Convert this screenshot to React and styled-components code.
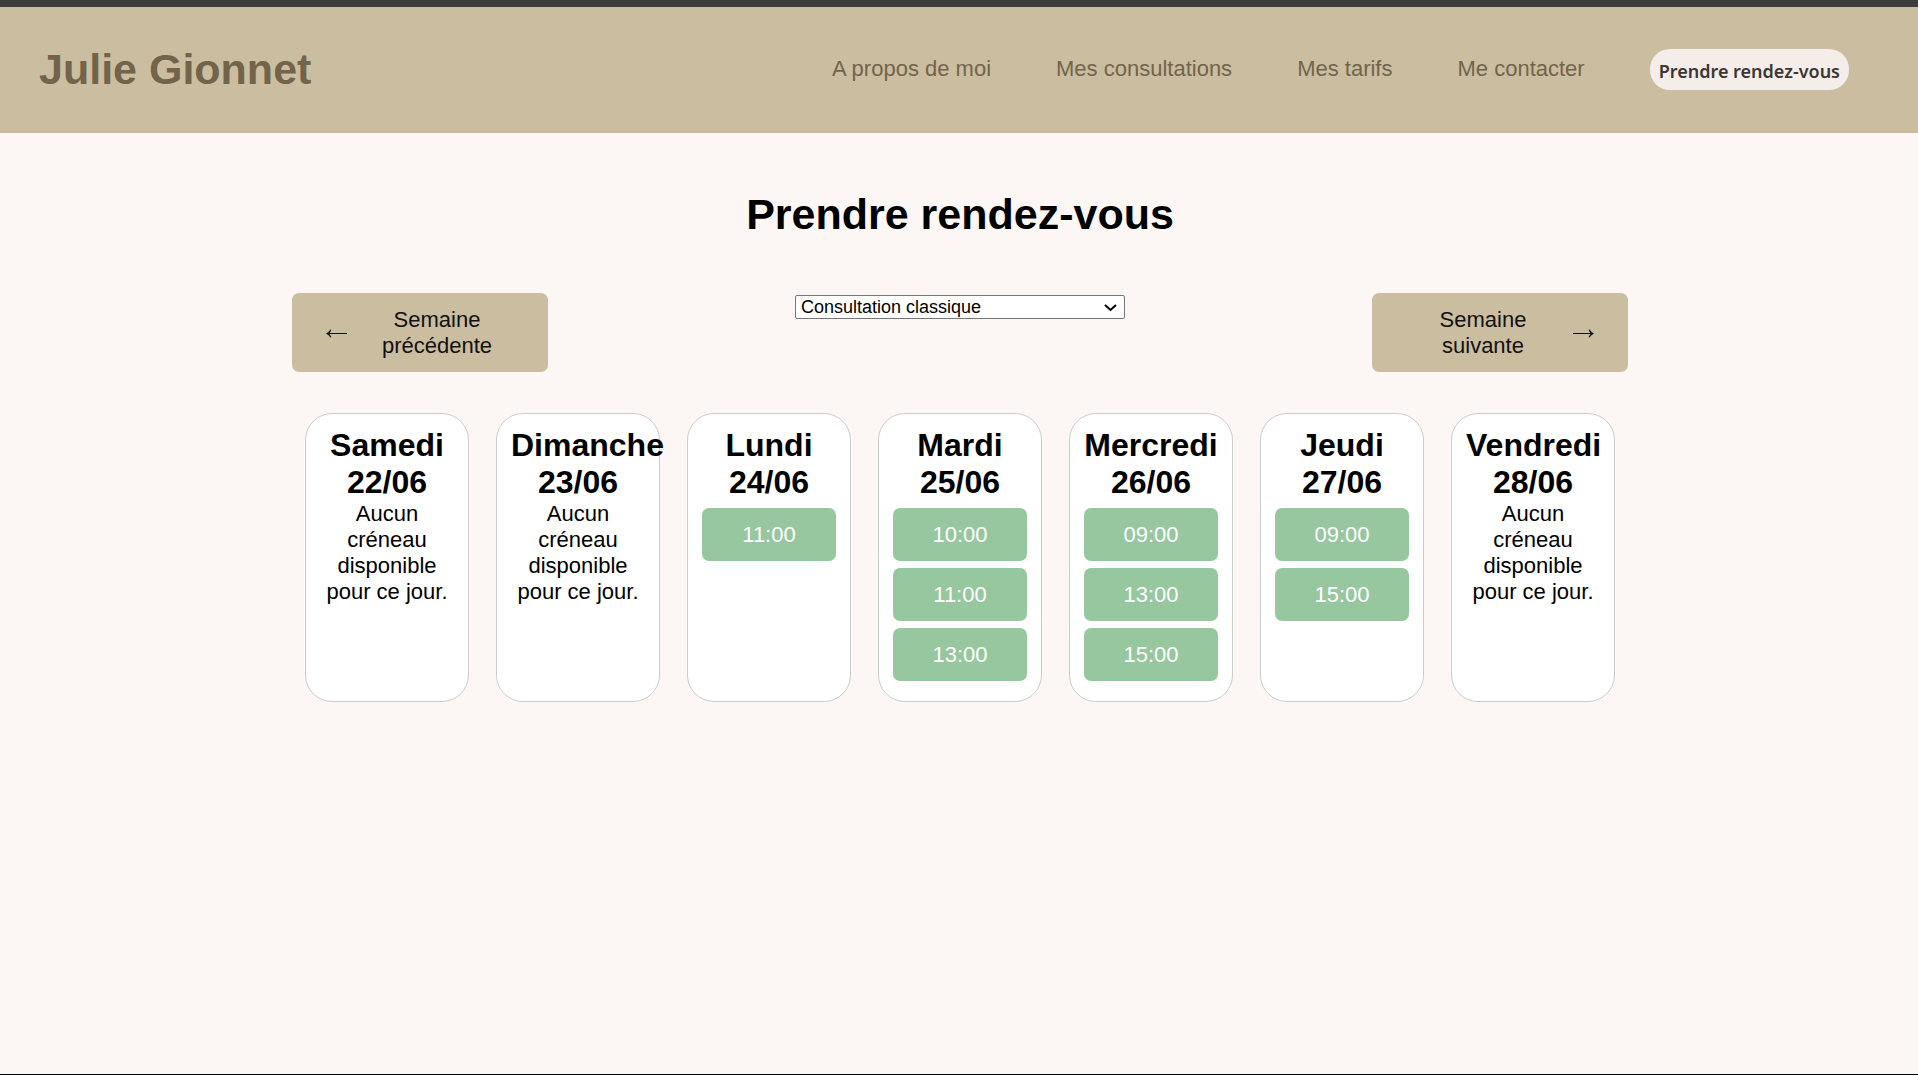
import React, { useState } from "react";
import styled, { createGlobalStyle } from "styled-components";

const GlobalStyle = createGlobalStyle`
  *, *::before, *::after { box-sizing: border-box; }
  body {
    margin: 0;
    background: #fcf7f4;
    color: #000;
    font-family: Arial, "Liberation Sans", sans-serif;
    font-size: 22px;
    line-height: 26px;
  }
`;

const Page = styled.div`
  min-height: 100vh;
  border-top: 7px solid #3c3c3c;
  border-bottom: 1px solid #000;
`;

const Header = styled.header`
  display: flex;
  align-items: center;
  justify-content: space-between;
  min-height: 126px;
  padding: 0 69px 2px 39px;
  background: #cbbd9f;
`;

const Brand = styled.div`
  color: #72644c;
  font-size: 43px;
  font-weight: 700;
  line-height: 50px;
`;

const Nav = styled.nav`
  display: flex;
  align-items: center;
  gap: 65px;
`;

const NavLink = styled.a`
  color: #72644c;
  text-decoration: none;
`;

const BookButton = styled.button`
  height: 41px;
  padding: 3px 9px 0;
  border: 0;
  border-radius: 20px;
  background: #f5edea;
  color: #3a3731;
  font-family: "Noto Sans", "Open Sans", sans-serif;
  font-size: 18px;
  font-weight: 600;
  line-height: 26px;
  cursor: pointer;
`;

const Main = styled.main`
  display: flex;
  flex-direction: column;
  align-items: center;
  padding: 56px 0 56px 2px;
`;

const Title = styled.h1`
  margin: 0 0 54px;
  font-size: 43px;
  line-height: 50px;
`;

const Planner = styled.div`
  display: flex;
  flex-direction: column;
  gap: 41px;
  width: 100%;
  max-width: 1336px;
`;

const Toolbar = styled.div`
  display: flex;
  align-items: flex-start;
  justify-content: space-between;
`;

const WeekButton = styled.button`
  display: flex;
  flex-direction: ${({ $next }) => ($next ? "row-reverse" : "row")};
  align-items: center;
  gap: 26px;
  width: 256px;
  padding: ${({ $next }) => ($next ? "14px 34px 13px 47px" : "14px 47px 13px 34px")};
  border: 0;
  border-radius: 7px;
  background: #cbbd9f;
  color: #111;
  font: inherit;
  cursor: pointer;
`;

const WeekLabel = styled.span`
  flex: 1;
  text-align: center;
`;

const SelectBox = styled.div`
  position: relative;
  display: flex;
  width: 330px;
  margin: 2px;
`;

const ConsultationSelect = styled.select`
  appearance: none;
  width: 100%;
  height: 24px;
  padding: 0 24px 0 5px;
  border: 1px solid #767676;
  border-radius: 2px;
  background-color: #fff;
  color: #000;
  font-family: inherit;
  font-size: 18px;
`;

const Chevron = styled.svg`
  position: absolute;
  top: 8px;
  right: 8px;
  pointer-events: none;
`;

const Week = styled.div`
  display: grid;
  grid-template-columns: repeat(7, minmax(0, 1fr));
  gap: 27px;
  padding: 0 13px;
`;

const Day = styled.section`
  padding: 13px 14px 20px;
  border: 1px solid #ccc;
  border-radius: 27px;
  background: #fff;
  text-align: center;
`;

const DayTitle = styled.h2`
  margin: 0;
  font-size: 32px;
  line-height: 37px;
`;

const Empty = styled.p`
  margin: 0;
`;

const Slots = styled.div`
  display: flex;
  flex-direction: column;
  gap: 7px;
  padding-top: 7px;
`;

const Slot = styled.button`
  height: 53px;
  padding: 0;
  border: 0;
  border-radius: 7px;
  background: #97c79f;
  color: #fff;
  font: inherit;
  cursor: pointer;
`;

const links = ["A propos de moi", "Mes consultations", "Mes tarifs", "Me contacter"];

const days = [
  { name: "Samedi", date: "22/06", slots: [] },
  { name: "Dimanche", date: "23/06", slots: [] },
  { name: "Lundi", date: "24/06", slots: ["11:00"] },
  { name: "Mardi", date: "25/06", slots: ["10:00", "11:00", "13:00"] },
  { name: "Mercredi", date: "26/06", slots: ["09:00", "13:00", "15:00"] },
  { name: "Jeudi", date: "27/06", slots: ["09:00", "15:00"] },
  { name: "Vendredi", date: "28/06", slots: [] },
];

function Arrow({ next }) {
  return (
    <svg width="21" height="12" viewBox="0 0 21 12" fill="currentColor" aria-hidden="true">
      <g transform={next ? "translate(21 0) scale(-1 1)" : undefined}>
        <path d="M2 6H21V7H2Z" />
        <path d="M0 6.5Q3 5.2 4.3 2.4L5.3 2.9Q4.6 5 3 6.5Q4.6 8 5.3 10.1L4.3 10.6Q3 7.8 0 6.5Z" />
      </g>
    </svg>
  );
}

export default function App() {
  const [kind, setKind] = useState("Consultation classique");
  return (
    <>
      <GlobalStyle />
      <Page>
        <Header>
          <Brand>Julie Gionnet</Brand>
          <Nav>
            {links.map((label) => (
              <NavLink key={label} href="#">{label}</NavLink>
            ))}
            <BookButton type="button">Prendre rendez-vous</BookButton>
          </Nav>
        </Header>
        <Main>
          <Title>Prendre rendez-vous</Title>
          <Planner>
            <Toolbar>
              <WeekButton type="button">
                <Arrow />
                <WeekLabel>Semaine précédente</WeekLabel>
              </WeekButton>
              <SelectBox>
                <ConsultationSelect
                  aria-label="Consultation"
                  value={kind}
                  onChange={(event) => setKind(event.target.value)}
                >
                  <option>Consultation classique</option>
                </ConsultationSelect>
                <Chevron width="13" height="9" viewBox="0 0 13 9" fill="none" stroke="#000" strokeWidth="2" aria-hidden="true">
                  <path d="M1 2L6.5 7L12 2" />
                </Chevron>
              </SelectBox>
              <WeekButton type="button" $next>
                <Arrow next />
                <WeekLabel>Semaine suivante</WeekLabel>
              </WeekButton>
            </Toolbar>
            <Week>
              {days.map(({ name, date, slots }) => (
                <Day key={date}>
                  <DayTitle>{name} {date}</DayTitle>
                  {slots.length === 0 ? (
                    <Empty>Aucun créneau disponible pour ce jour.</Empty>
                  ) : (
                    <Slots>
                      {slots.map((time) => (
                        <Slot key={time} type="button">{time}</Slot>
                      ))}
                    </Slots>
                  )}
                </Day>
              ))}
            </Week>
          </Planner>
        </Main>
      </Page>
    </>
  );
}
